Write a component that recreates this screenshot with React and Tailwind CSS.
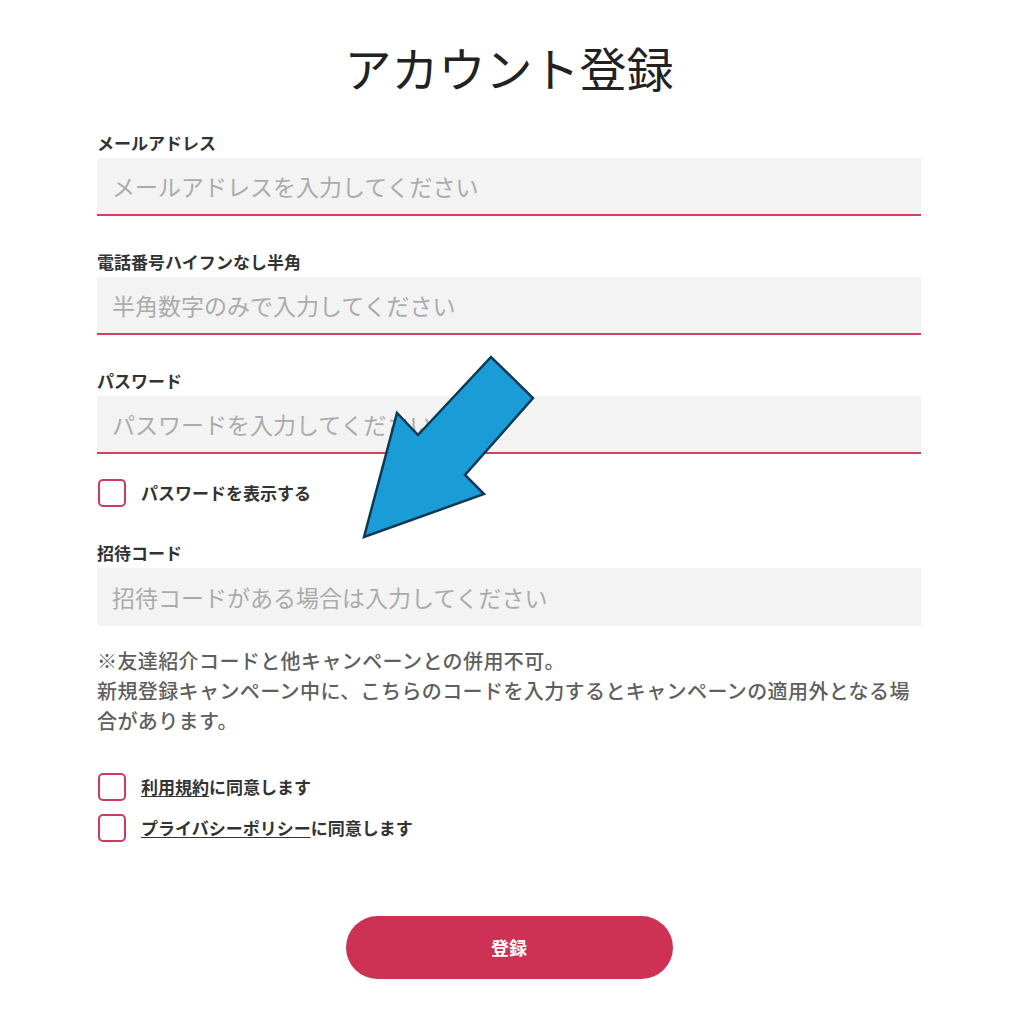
import React from "react";

const font = { fontFamily: '"Noto Sans CJK JP", "Noto Sans", sans-serif' };

function Field({ label, placeholder, underline = true }) {
  return (
    <div className="flex flex-col">
      <div className="h-[20px] text-[17px] leading-[20px] font-bold text-[#333]">{label}</div>
      <input
        type="text"
        placeholder={placeholder}
        className={
          "mt-[5px] h-[58px] w-full bg-[#f3f3f3] pl-[15px] text-[23px] text-[#333] placeholder:text-[#ababab] outline-none " +
          (underline ? "border-b-2 border-[#d4415f]" : "")
        }
      />
    </div>
  );
}

function Box() {
  return <span className="block h-[28px] w-[28px] shrink-0 rounded-[5px] border-2 border-[#cc3a5c] bg-white" />;
}

export default function App() {
  return (
    <div className="relative w-[1012px] h-[1024px] bg-white overflow-hidden" style={font}>
      <div className="ml-[97px] w-[824px] flex flex-col">
        <h1 className="pt-[44px] h-[90px] text-center text-[47px] leading-[46px] font-normal text-[#222]">
          アカウント登録
        </h1>
        <div className="mt-[43px] flex flex-col">
          <Field label="メールアドレス" placeholder="メールアドレスを入力してください" />
          <div className="mt-[36px]">
            <Field label="電話番号ハイフンなし半角" placeholder="半角数字のみで入力してください" />
          </div>
          <div className="mt-[36px]">
            <Field label="パスワード" placeholder="パスワードを入力してください" />
          </div>
          <label className="mt-[25px] flex items-center gap-[15px] pl-[1px]">
            <Box />
            <span className="text-[17px] font-bold text-[#333]">パスワードを表示する</span>
          </label>
          <div className="mt-[36px]">
            <Field label="招待コード" placeholder="招待コードがある場合は入力してください" underline={false} />
          </div>
          <p className="mt-[20px] text-[20px] leading-[30px] tracking-[0.4px] text-[#5f5f5f] whitespace-nowrap font-medium">
            ※友達紹介コードと他キャンペーンとの併用不可。
            <br />
            新規登録キャンペーン中に、こちらのコードを入力するとキャンペーンの適用外となる場
            <br />
            合があります。
          </p>
          <label className="mt-[37px] flex items-center gap-[15px] pl-[1px]">
            <Box />
            <span className="text-[17px] font-bold text-[#333]">
              <span className="underline underline-offset-2">利用規約</span>に同意します
            </span>
          </label>
          <label className="mt-[13px] flex items-center gap-[15px] pl-[1px]">
            <Box />
            <span className="text-[17px] font-bold text-[#333]">
              <span className="underline underline-offset-2">プライバシーポリシー</span>に同意します
            </span>
          </label>
          <div className="mt-[74px] flex justify-center">
            <button className="h-[63px] w-[327px] rounded-full bg-[#cd3254] text-[18px] font-bold text-white">
              登録
            </button>
          </div>
        </div>
      </div>
      <svg
        className="pointer-events-none absolute left-0 top-0"
        width="1012"
        height="1024"
        viewBox="0 0 1012 1024"
      >
        <polygon
          points="364,537 397,413 418,435 491,357 533,398 465,475 484,494"
          fill="#1a9dd6"
          stroke="#0c3a55"
          strokeWidth="2.5"
          strokeLinejoin="miter"
        />
      </svg>
    </div>
  );
}
